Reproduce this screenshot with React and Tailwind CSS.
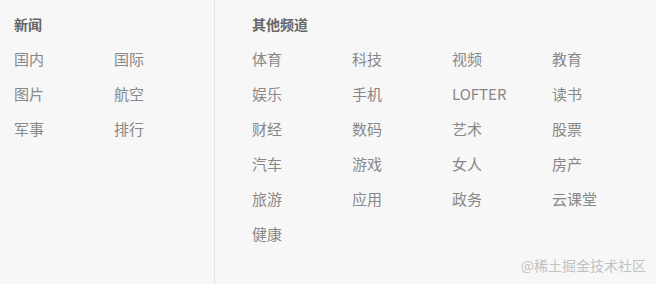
import React from 'react';

const news = ['国内', '国际', '图片', '航空', '军事', '排行'];
const others = [
  '体育', '科技', '视频', '教育',
  '娱乐', '手机', 'LOFTER', '读书',
  '财经', '数码', '艺术', '股票',
  '汽车', '游戏', '女人', '房产',
  '旅游', '应用', '政务', '云课堂',
  '健康',
];

export default function App() {
  return (
    <div
      className="relative flex w-[656px] h-[284px] bg-[#f7f7f8] overflow-hidden"
      style={{ fontFamily: '"Microsoft YaHei", "Noto Sans CJK SC", sans-serif' }}
    >
      {/* left: 新闻 */}
      <div className="w-[215px] shrink-0 pl-[14px] pt-[7px] border-r border-[#e2e2e2]">
        <div className="h-[34px] leading-[35px] text-[14px] font-bold text-[#666]">新闻</div>
        <div className="grid grid-cols-[100px_100px]">
          {news.map((n) => (
            <div key={n} className="h-[35px] leading-[35px] text-[15px] text-[#888]">{n}</div>
          ))}
        </div>
      </div>

      {/* right: 其他频道 */}
      <div className="flex-1 pl-[37px] pt-[7px]">
        <div className="h-[34px] leading-[35px] text-[14px] font-bold text-[#666]">其他频道</div>
        <div className="grid grid-cols-[100px_100px_100px_100px]">
          {others.map((n) => (
            <div key={n} className="h-[35px] leading-[35px] text-[15px] text-[#888]">{n}</div>
          ))}
        </div>
      </div>

      <div className="absolute right-[10px] bottom-[8px] text-[14px] text-[#c2c2c2]">@稀土掘金技术社区</div>
    </div>
  );
}
